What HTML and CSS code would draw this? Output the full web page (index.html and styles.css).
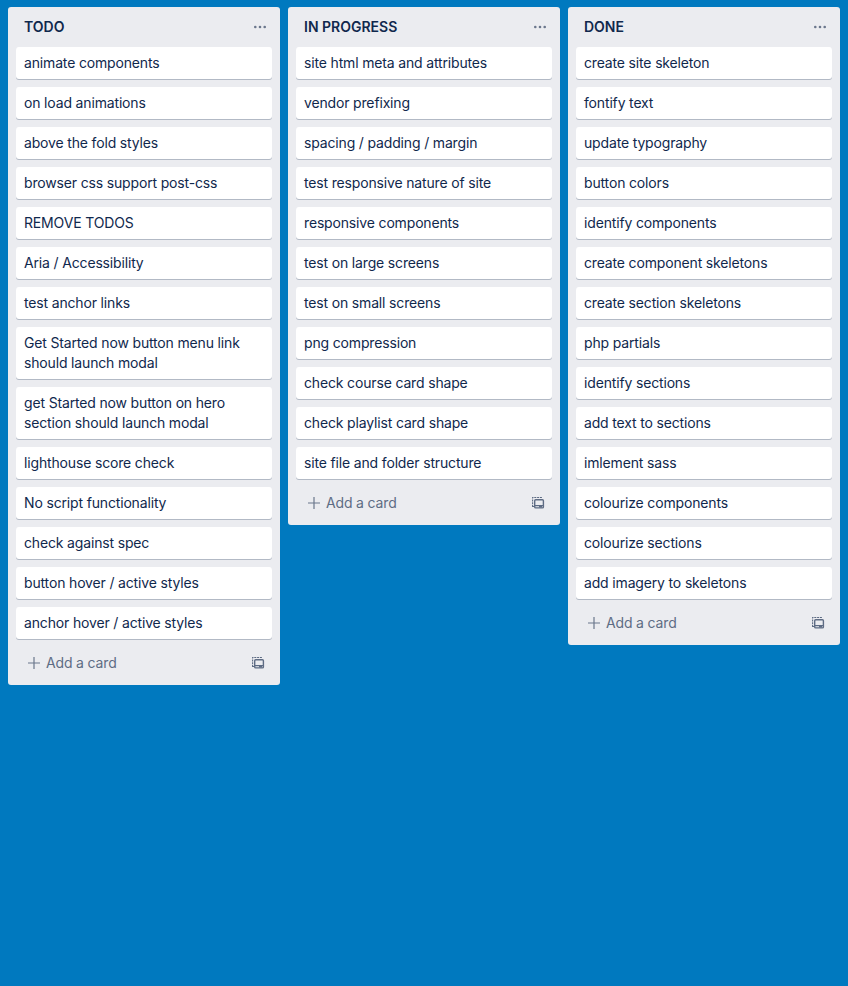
FILE: index.html
```html
<!DOCTYPE html>
<html lang="en">
<head>
<meta charset="utf-8">
<title>Board</title>
<link rel="stylesheet" href="styles.css">
</head>
<body>
<svg class="defs" aria-hidden="true">
  <symbol id="dots" viewBox="0 0 14 14"><g fill="currentColor"><circle cx="2.3" cy="7" r="1.3"/><circle cx="7" cy="7" r="1.3"/><circle cx="11.7" cy="7" r="1.3"/></g></symbol>
  <symbol id="plus" viewBox="0 0 14 14"><path d="M7 1v12M1 7h12" stroke="currentColor" stroke-width="1.2" fill="none"/></symbol>
  <symbol id="template" viewBox="0 0 14 14"><g fill="none" stroke="currentColor"><path d="M1.6 11V1.5H11" stroke-width="1.1" stroke-dasharray="2 .8"/><path d="M1.2 10.5h1.8" stroke-width="1.1"/><rect x="3.7" y="3.7" width="8.7" height="8.2" rx="1" stroke-width="1.4"/></g><path d="M4 9h8v1.2H4zM8 9.5h3v2H8z" fill="currentColor"/></symbol>
</svg>
<main class="board">
  <section class="list">
    <header class="list-header"><h2>TODO</h2><svg class="icon"><use href="#dots"/></svg></header>
    <div class="cards">
      <div class="card">animate components</div>
      <div class="card">on load animations</div>
      <div class="card">above the fold styles</div>
      <div class="card">browser css support post-css</div>
      <div class="card">REMOVE TODOS</div>
      <div class="card">Aria / Accessibility</div>
      <div class="card">test anchor links</div>
      <div class="card">Get Started now button menu link<br>should launch modal</div>
      <div class="card">get Started now button on hero<br>section should launch modal</div>
      <div class="card">lighthouse score check</div>
      <div class="card">No script functionality</div>
      <div class="card">check against spec</div>
      <div class="card">button hover / active styles</div>
      <div class="card">anchor hover / active styles</div>
    </div>
    <footer class="list-footer"><svg class="icon plus"><use href="#plus"/></svg><span>Add a card</span><svg class="icon template"><use href="#template"/></svg></footer>
  </section>
  <section class="list">
    <header class="list-header"><h2>IN PROGRESS</h2><svg class="icon"><use href="#dots"/></svg></header>
    <div class="cards">
      <div class="card">site html meta and attributes</div>
      <div class="card">vendor prefixing</div>
      <div class="card">spacing / padding / margin</div>
      <div class="card">test responsive nature of site</div>
      <div class="card">responsive components</div>
      <div class="card">test on large screens</div>
      <div class="card">test on small screens</div>
      <div class="card">png compression</div>
      <div class="card">check course card shape</div>
      <div class="card">check playlist card shape</div>
      <div class="card">site file and folder structure</div>
    </div>
    <footer class="list-footer"><svg class="icon plus"><use href="#plus"/></svg><span>Add a card</span><svg class="icon template"><use href="#template"/></svg></footer>
  </section>
  <section class="list">
    <header class="list-header"><h2>DONE</h2><svg class="icon"><use href="#dots"/></svg></header>
    <div class="cards">
      <div class="card">create site skeleton</div>
      <div class="card">fontify text</div>
      <div class="card">update typography</div>
      <div class="card">button colors</div>
      <div class="card">identify components</div>
      <div class="card">create component skeletons</div>
      <div class="card">create section skeletons</div>
      <div class="card">php partials</div>
      <div class="card">identify sections</div>
      <div class="card">add text to sections</div>
      <div class="card">imlement sass</div>
      <div class="card">colourize components</div>
      <div class="card">colourize sections</div>
      <div class="card">add imagery to skeletons</div>
    </div>
    <footer class="list-footer"><svg class="icon plus"><use href="#plus"/></svg><span>Add a card</span><svg class="icon template"><use href="#template"/></svg></footer>
  </section>
</main>
</body>
</html>
```
FILE: styles.css
```css
* { box-sizing: border-box; }
body {
  margin: 0;
  min-height: 100vh;
  background: #0079bf;
  color: #10284d;
  font: 14px/20px Inter, "Liberation Sans", sans-serif;
  letter-spacing: -0.16px;
}
.defs { display: none; }
.board {
  display: flex;
  align-items: flex-start;
  gap: 8px;
  padding: 7px 8px;
}
.list {
  flex: 0 0 272px;
  padding: 0 8px;
  background: #ebecf0;
  border-radius: 3px;
}
.list-header {
  display: flex;
  align-items: center;
  justify-content: space-between;
  height: 40px;
  padding: 0 5px 0 8px;
}
.list-header h2 {
  margin: 0;
  font-size: 14px;
  font-weight: 600;
  letter-spacing: 0;
}
.icon {
  display: block;
  width: 14px;
  height: 14px;
  color: #6b778c;
}
.cards {
  display: flex;
  flex-direction: column;
  gap: 8px;
}
.card {
  padding: 6px 8px;
  background: #fff;
  border-radius: 3px;
  box-shadow: 0 1px 0 rgba(9, 30, 66, 0.25);
  white-space: nowrap;
}
.list-footer {
  display: flex;
  align-items: center;
  height: 46px;
  padding: 2px 7px 0 11px;
  color: #5e6c84;
}
.plus { margin-right: 5px; }
.template {
  margin-left: auto;
  color: #5e6c84;
}
```
